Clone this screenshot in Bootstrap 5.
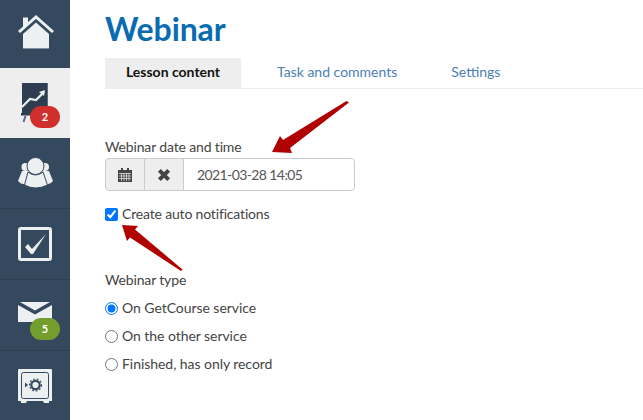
<!DOCTYPE html>
<html lang="en"><head><meta charset="utf-8"><title>Webinar</title>
<link rel="stylesheet" href="https://cdn.jsdelivr.net/npm/bootstrap@5.3.0/dist/css/bootstrap.min.css">
<style>
html,body{height:420px;overflow:hidden}
body{font-family:Lato,"Liberation Sans",sans-serif;font-size:14px;color:#444;background:#fff;position:relative}
.rail{width:70px;height:420px;background:#34495e;flex:none}
.rail-item{height:71px;border-bottom:1px solid #2c3e50;position:relative;display:flex;align-items:center;justify-content:center}
.rail-item.is-first{height:68px;border-bottom:0}
.rail-item.is-on{background:#eee;height:70px;border-bottom:0}
.rail-item.is-last{height:69px;border-bottom:0}
.rail-item svg{display:block;flex:none}
.pill{position:absolute;left:30px;top:38px;width:30px;height:22px;border-radius:11px;color:#fff;font-size:11px;font-weight:700;display:flex;align-items:center;justify-content:center}
.pill-red{background:#d12f2c}
.pill-green{background:#739e2e}
.main{padding:0 0 0 35px;flex:1;min-width:0}
.page-title{font-size:32px;font-weight:700;color:#0a6cb0;line-height:38px;margin:10px 0 10px;letter-spacing:-.1px}
.tabbar{border-bottom:1px solid #eee;height:31px}
.tabbar a{display:block;height:30px;line-height:28px;text-decoration:none;color:#4a7fb5;font-size:14px}
.tabbar .tab-on{background:#eee;color:#111;font-weight:700;width:136px;text-align:center}
.tab-two{margin-left:36px}.tab-three{margin-left:54px}
.fld-label{line-height:18px;margin:0;color:#444;letter-spacing:-.15px}
.stack{margin-top:49px}
.dt-group{width:250px;height:33px;margin-top:2px}
.dt-group .btn{width:40px;padding:0;background:#eee;border:1px solid #ccc;color:#444;display:flex;align-items:center;justify-content:center;border-radius:4px 0 0 4px}
.dt-group .btn+.btn{border-radius:0;margin-left:-1px}
.dt-group .form-control{border:1px solid #ccc;font-size:14px;color:#555;padding:0 13px;margin-left:-1px;border-radius:0 4px 4px 0;height:33px;font-family:inherit;letter-spacing:-.6px}
.opt{display:flex;align-items:center;line-height:18px;color:#444;margin:0;letter-spacing:-.05px}
.opt input{margin:0 4px 0 0;width:13px;height:13px;flex:none}
.opt-check{margin-top:14px;letter-spacing:-.17px}
.type-label{margin-top:48px}
.opt-a{margin-top:10px}.opt-b{margin-top:10px}
.arrow{position:absolute;left:0;top:0;pointer-events:none}
</style></head><body>
<div class="d-flex">
<nav class="rail">
<div class="rail-item is-first"><svg width="38" height="38" viewBox="16 15 38 38"><path d="M23 34 36 22.500 49 34V49H23Z" fill="#ecf0f1"/><path d="M23 48.500H49" stroke="#7f8fa0" stroke-width="1"/><path d="M23 17.500h5v7l-5 4.500z" fill="#ecf0f1"/><path d="M19 32 36 17 53 32" fill="none" stroke="#ecf0f1" stroke-width="3"/></svg></div>
<div class="rail-item is-on"><svg width="50" height="50" viewBox="10 78 50 50"><rect x="22" y="83" width="26" height="32" fill="#2c3e50"/><rect x="47" y="83" width="1" height="32" fill="#5a6d80"/><path d="M22 107 30 99l6 1 8-8" fill="none" stroke="#ecf0f1" stroke-width="2.200"/><path d="M39 92l6-2-1 6z" fill="#ecf0f1"/><rect x="21" y="113" width="16" height="2.500" fill="#2c3e50"/><path d="M25.500 116 23.500 122" stroke="#5a6d80" stroke-width="2"/></svg><span class="pill pill-red">2</span></div>
<div class="rail-item"><svg width="40" height="37" viewBox="15 155 40 37"><g fill="#ecf0f1"><circle cx="25.500" cy="167" r="4"/><circle cx="45" cy="167" r="4"/><path d="M22 171 18 181q2 3 8 3.500L30 171z"/><path d="M49 171l4 10q-2 3-8 3.500L41 171z"/></g><circle cx="35.500" cy="166" r="8.500" fill="#ecf0f1" stroke="#34495e" stroke-width="1"/><path d="M28 172q7.500 6 15 0l4.500 13q-12 6-23 0z" fill="#ecf0f1" stroke="#34495e" stroke-width="1"/></svg></div>
<div class="rail-item"><svg width="34" height="34" viewBox="18 228 34 34"><rect x="19.500" y="229.500" width="31" height="31" rx="1.500" fill="none" stroke="#ecf0f1" stroke-width="3"/><path d="M25 248l3-3 4 5 14-15-13 20h-2z" fill="#ecf0f1"/></svg></div>
<div class="rail-item"><svg width="34" height="20" viewBox="18 306 34 20" style="margin-top:-6px"><path d="M18 309 35 318.500 52 309V326H18Z" fill="#ecf0f1"/><path d="M20 306H50L35 314.500Z" fill="#ecf0f1"/></svg><span class="pill pill-green">5</span></div>
<div class="rail-item is-last"><svg width="34" height="35" viewBox="0 0 34 35" style="margin-top:2px"><path d="M1 0H33a1 1 0 0 1 1 1V32h-3v2h-5l-1-2H9l-1 2H3v-2H0V1a1 1 0 0 1 1-1Z" fill="#ecf0f1"/><rect x="3.500" y="3.500" width="27" height="26" rx="2" fill="none" stroke="#34495e" stroke-width="1"/><circle cx="17.500" cy="16" r="4.200" fill="none" stroke="#34495e" stroke-width="2.200"/><circle cx="17.500" cy="16" r="6" fill="none" stroke="#34495e" stroke-width="1.200" stroke-dasharray="1.800 1.800"/><path d="M7 13.500v5l3-2.500z" fill="#34495e"/></svg></div>
</nav>
<main class="main">
<h1 class="page-title">Webinar</h1>
<div class="tabbar d-flex"><a href="#" class="tab-on">Lesson content</a><a href="#" class="tab-two">Task and comments</a><a href="#" class="tab-three">Settings</a></div>
<div class="stack">
<p class="fld-label">Webinar date and time</p>
<div class="input-group flex-nowrap dt-group">
<button type="button" class="btn" aria-label="Calendar"><svg width="14" height="14" viewBox="0 0 14 14"><path d="M0 2h14v12H0z" fill="#444"/><path d="M3 0h2v3H3zM9 0h2v3H9z" fill="#444"/><path d="M1 5.500h12M1 8h12M1 10.500h12M3.500 5v8M6 5v8M8.500 5v8M11 5v8" stroke="#eee" stroke-width=".7"/></svg></button>
<button type="button" class="btn" aria-label="Clear"><svg width="14" height="14" viewBox="0 0 13 13"><path d="M2.200 2.200l8.600 8.600M10.800 2.200l-8.600 8.600" stroke="#444" stroke-width="3.800"/></svg></button>
<input type="text" class="form-control" value="2021-03-28 14:05">
</div>
<label class="opt opt-check"><input type="checkbox" checked>Create auto notifications</label>
<p class="fld-label type-label">Webinar type</p>
<label class="opt opt-a"><input type="radio" name="wt" checked>On GetCourse service</label>
<label class="opt opt-b"><input type="radio" name="wt">On the other service</label>
<label class="opt opt-b"><input type="radio" name="wt">Finished, has only record</label>
</div>
</main>
</div>
<svg class="arrow" width="643" height="420" viewBox="0 0 643 420"><path d="M349 102.500 290 148 292 153 272 152 280 136 283 140 346.500 101Z" fill="#b00000"/><path d="M122 225 138 226 135 229.500 182.500 269.500 181 271 130 237.500 127 241Z" fill="#b00000"/></svg>
</body></html>
